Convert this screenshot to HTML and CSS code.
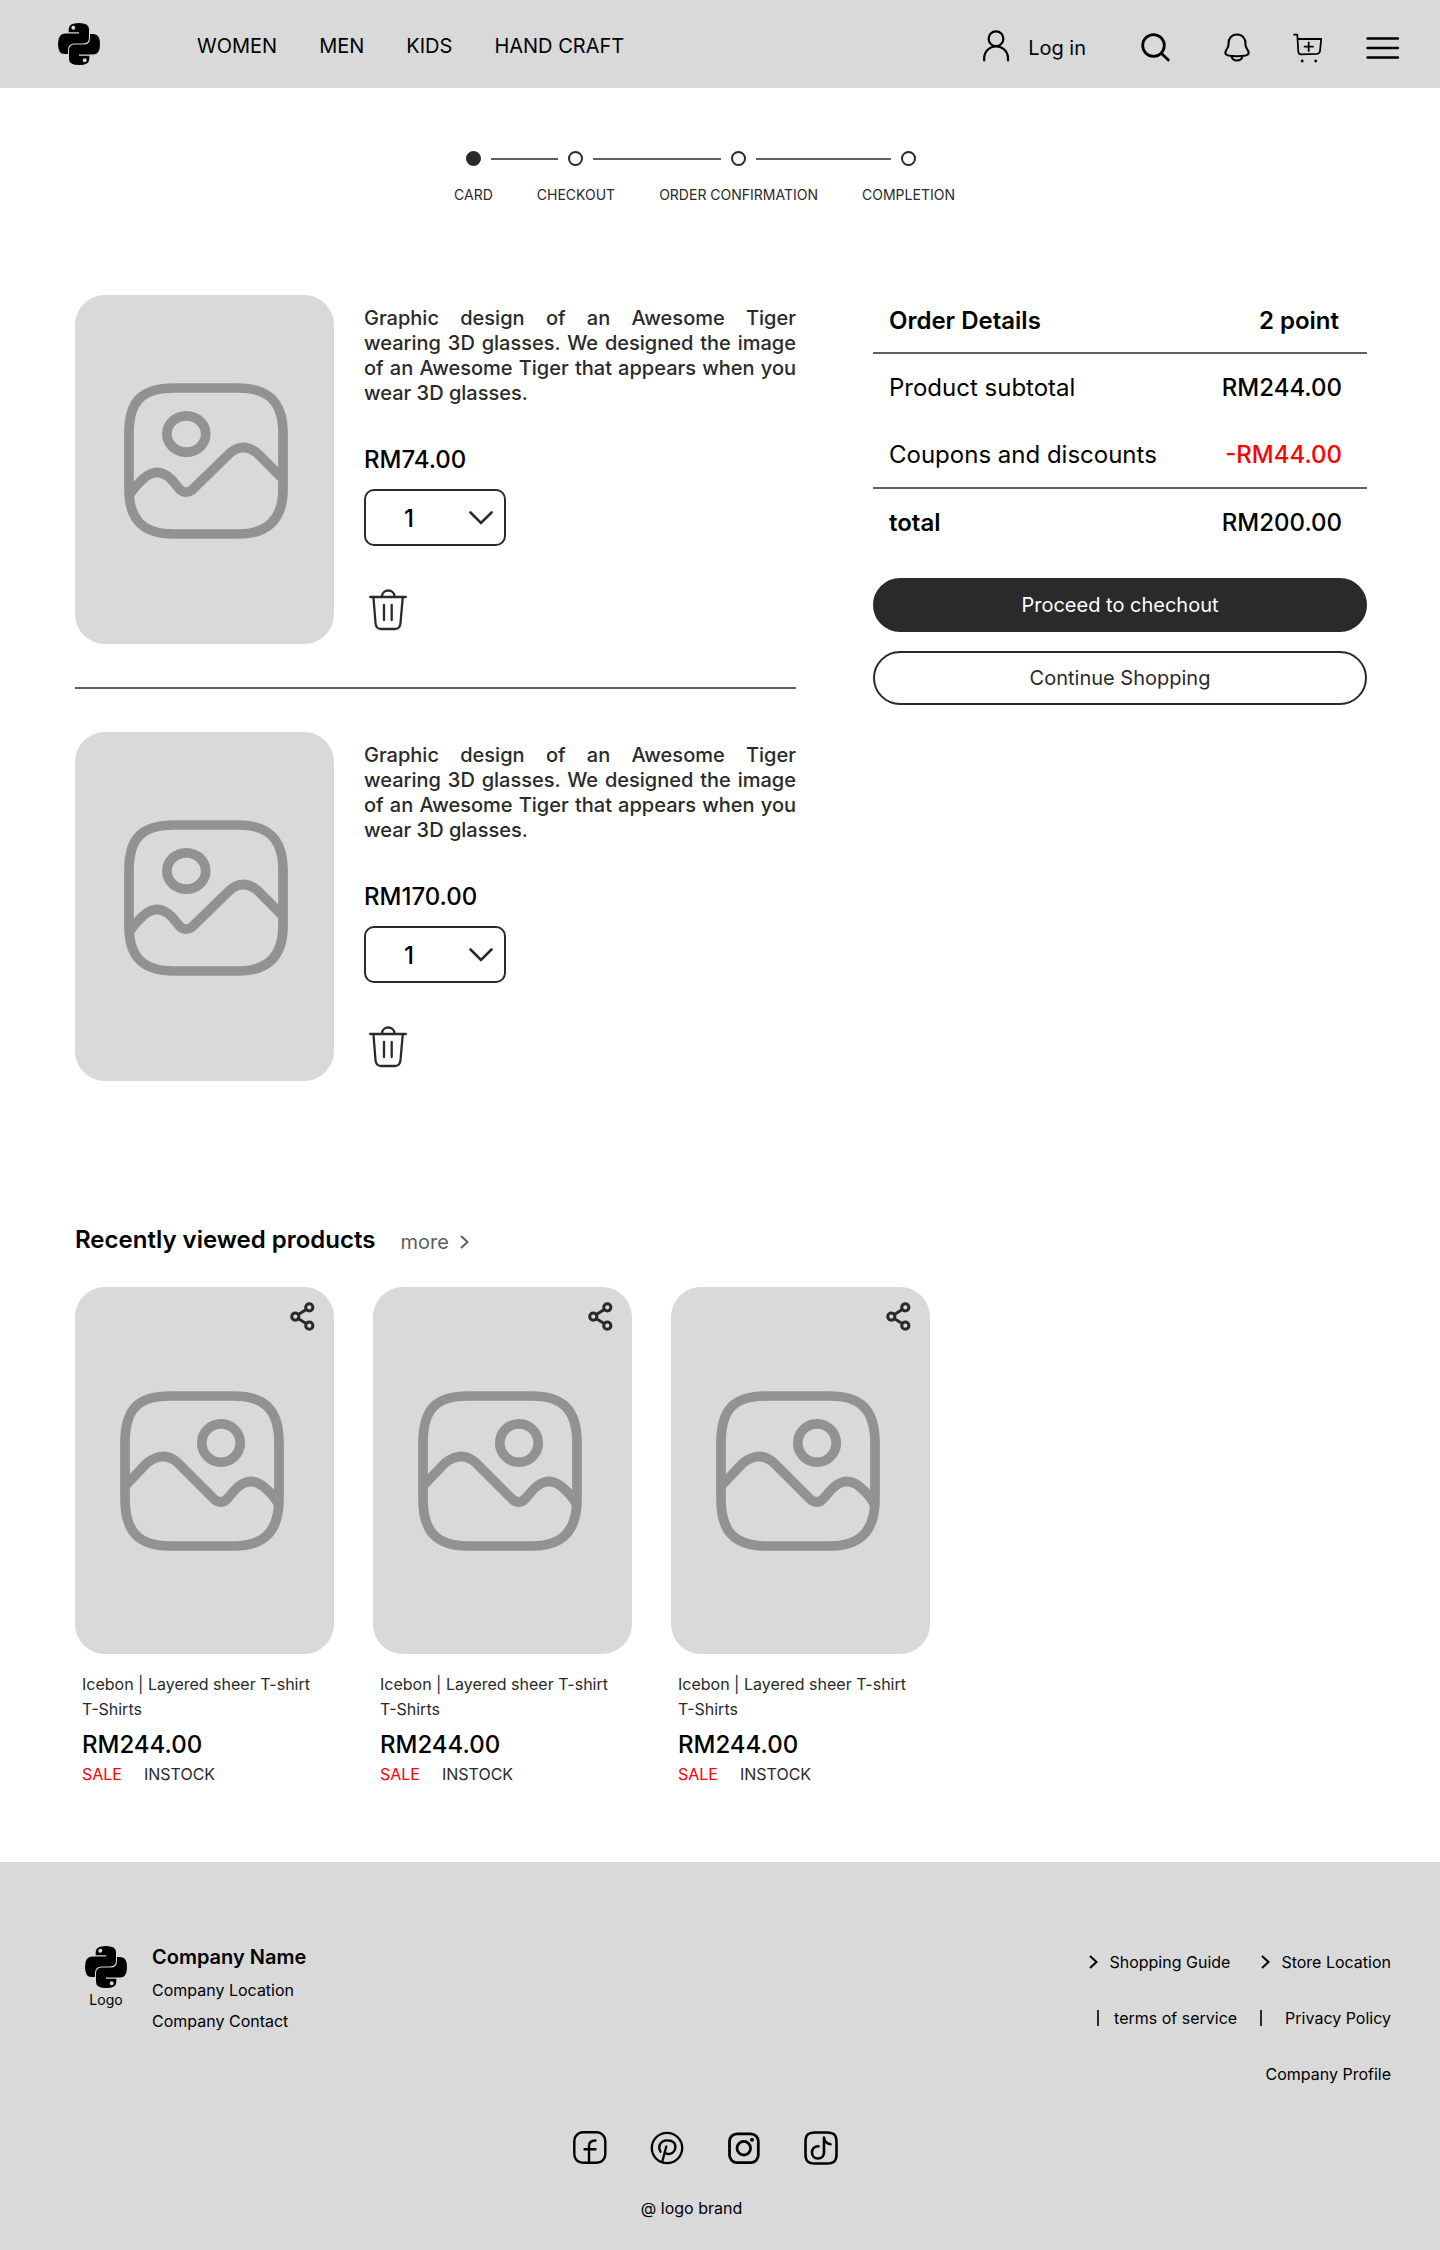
FILE: index.html
```html
<!DOCTYPE html>
<html lang="en">
<head>
<meta charset="utf-8">
<meta name="viewport" content="width=device-width, initial-scale=1">
<title>Shopping cart</title>
<link rel="stylesheet" href="styles.css">
</head>
<body>
<svg class="sprite" aria-hidden="true">
  <defs>
    <symbol id="logo" viewBox="0 0 42 42">
      <g id="logo-half">
        <path fill-rule="evenodd" d="M10.7 9.2V6Q10.7 0 20.8 0Q31 0 31 6V14.5Q31 20.4 25 20.4H16.5Q10 20.4 10 27V31H6.5Q0 31 0 21Q0 10.4 7 10.4H21V9.2ZM15.3 2.8A2 2 0 1 0 15.3 6.8A2 2 0 1 0 15.3 2.8Z"/>
      </g>
      <use href="#logo-half" transform="rotate(180 21 21)"/>
    </symbol>
    <symbol id="picture-a" viewBox="0 0 164 156">
      <g fill="none" stroke="#929292" stroke-width="9.7">
        <path d="M50 5H114C144 5 159 18 159 50V106C159 136 144 151 114 151H50C18 151 5 136 5 106V50C5 18 18 5 50 5Z"/>
        <ellipse cx="62.3" cy="51" rx="19.4" ry="18.2"/>
        <path d="M6 111C11 103 15 100 19 96Q33 83 47 96C51 100 54 105 57 107.500Q62.300 111 68 107L106 70Q119 59 133 70L158 95"/>
      </g>
    </symbol>
    <symbol id="picture-b" viewBox="0 0 164 160">
      <g fill="none" stroke="#929292" stroke-width="9.7">
        <path d="M50 5H114C144 5 159 18 159 52V108C159 140 144 155 114 155H50C18 155 5 140 5 108V52C5 18 18 5 50 5Z"/>
        <circle cx="101" cy="52" r="19.2"/>
        <path d="M6 94L27 72Q44 59 58 72L94 108Q101 114 107 108C112 103 115 98 118 96Q131 85 144 96C150 101 155 106 159 114"/>
      </g>
    </symbol>
    <symbol id="trash" viewBox="0 0 38 42">
      <path fill="none" stroke="#2a2a2a" stroke-width="2.300" stroke-linecap="round" d="M1.200 8H36.800M13 7.500C13 -0.500 25.500 -0.500 25.500 7.500M4.500 9L6.500 34Q7 40 12 40H26Q31 40 31.500 34L33.700 9M15 16V31M22.700 16V31"/>
    </symbol>
    <symbol id="share" viewBox="0 0 25 29">
      <g fill="none" stroke="#2a2a2a" stroke-width="3">
        <circle cx="5.300" cy="14.600" r="3.600"/><circle cx="19.300" cy="5.300" r="3.600"/><circle cx="19.300" cy="23.700" r="3.600"/>
        <path d="M8.400 12.500L16.200 7.400M8.400 16.700L16.200 21.600"/>
      </g>
    </symbol>
    <symbol id="chevron-right" viewBox="0 0 9 14">
      <path fill="none" stroke="currentColor" stroke-width="2" d="M1 1L7.500 7L1 13"/>
    </symbol>
    <symbol id="chevron-down" viewBox="0 0 24 14">
      <path fill="none" stroke="#2a2a2a" stroke-width="2.600" stroke-linecap="round" d="M1.500 1.500L12 12L22.500 1.500"/>
    </symbol>
  </defs>
</svg>

<header class="site-header">
  <a class="logo-link" href="#" aria-label="Home"><svg class="logo"><use href="#logo"/></svg></a>
  <nav class="main-nav" aria-label="Main">
    <a href="#">WOMEN</a>
    <a href="#">MEN</a>
    <a href="#">KIDS</a>
    <a href="#">HAND CRAFT</a>
  </nav>
  <div class="actions">
    <a class="login" href="#">
      <svg width="28" height="37" viewBox="0 0 28 37" fill="none" stroke="#000" stroke-width="2.200" stroke-linecap="round"><circle cx="13" cy="8.700" r="7.400"/><path d="M1.200 30.500V28.200A11.900 11.900 0 0 1 25 28.200V30.500"/></svg>
      <span>Log in</span>
    </a>
    <button class="icon-button search" type="button" aria-label="Search">
      <svg width="32" height="32" viewBox="0 0 32 32" fill="none" stroke="#000" stroke-width="2.800" stroke-linecap="round"><circle cx="13.500" cy="13.500" r="10.800"/><path d="M21.500 21.500L28.300 28"/></svg>
    </button>
    <button class="icon-button" type="button" aria-label="Notifications">
      <svg width="26" height="30" viewBox="0 0 26 30" fill="none" stroke="#000" stroke-width="2.100"><path d="M13 1.500C7.500 1.500 4.500 5.500 4.500 10.500V12C4.500 15 1.300 17 1.300 20C1.300 22.500 6 23.300 13 23.300S24.700 22.500 24.700 20C24.700 17 21.500 15 21.500 12V10.500C21.500 5.500 18.500 1.500 13 1.500Z"/><path d="M7.500 23.500C9 28.800 17 28.800 18.500 23.500"/></svg>
    </button>
    <button class="icon-button" type="button" aria-label="Cart">
      <svg width="30" height="30" viewBox="0 0 30 30" fill="none" stroke="#000" stroke-width="1.800" stroke-linejoin="round" stroke-linecap="round"><path d="M1 1.700H4.300L5.300 18.500Q5.500 21.500 8 21.400L24 20.800Q26.700 20.600 27 18L28.200 6H4.700M11.500 13.700H20M15.700 9.500V18"/><g fill="#000" stroke="none"><circle cx="9.200" cy="28" r="1.400"/><circle cx="22.700" cy="28" r="1.400"/></g></svg>
    </button>
    <button class="icon-button" type="button" aria-label="Menu">
      <svg width="34" height="24" viewBox="0 0 34 24" stroke="#000" stroke-width="2.400" stroke-linecap="round"><path d="M1.500 2.500H32M1.500 12H32M1.500 21.500H32"/></svg>
    </button>
  </div>
</header>

<main>
  <ol class="steps">
    <li class="step step-current" aria-current="step"><span class="track"><span class="dot"></span></span><span class="step-label">CARD</span></li>
    <li class="step"><span class="track"><span class="dot"></span></span><span class="step-label">CHECKOUT</span></li>
    <li class="step"><span class="track"><span class="dot"></span></span><span class="step-label">ORDER CONFIRMATION</span></li>
    <li class="step"><span class="track"><span class="dot"></span></span><span class="step-label">COMPLETION</span></li>
  </ol>

  <div class="checkout">
    <section class="cart" aria-label="Cart">
      <article class="cart-item">
        <div class="cart-picture"><svg width="164" height="156"><use href="#picture-a"/></svg></div>
        <div class="cart-info">
          <p class="description">Graphic design of an Awesome Tiger wearing 3D glasses. We designed the image of an Awesome Tiger that appears when you wear 3D glasses.</p>
          <p class="price">RM74.00</p>
          <div class="quantity">
            <select aria-label="Quantity"><option>1</option><option>2</option><option>3</option></select>
            <svg width="24" height="14"><use href="#chevron-down"/></svg>
          </div>
          <button class="icon-button remove" type="button" aria-label="Remove item"><svg width="38" height="42"><use href="#trash"/></svg></button>
        </div>
      </article>
      <article class="cart-item">
        <div class="cart-picture"><svg width="164" height="156"><use href="#picture-a"/></svg></div>
        <div class="cart-info">
          <p class="description">Graphic design of an Awesome Tiger wearing 3D glasses. We designed the image of an Awesome Tiger that appears when you wear 3D glasses.</p>
          <p class="price">RM170.00</p>
          <div class="quantity">
            <select aria-label="Quantity"><option>1</option><option>2</option><option>3</option></select>
            <svg width="24" height="14"><use href="#chevron-down"/></svg>
          </div>
          <button class="icon-button remove" type="button" aria-label="Remove item"><svg width="38" height="42"><use href="#trash"/></svg></button>
        </div>
      </article>
    </section>

    <aside class="summary">
      <table>
        <thead><tr><th scope="col">Order Details</th><th scope="col">2 point</th></tr></thead>
        <tbody>
          <tr><th scope="row">Product subtotal</th><td>RM244.00</td></tr>
          <tr><th scope="row">Coupons and discounts</th><td class="discount">-RM44.00</td></tr>
        </tbody>
        <tfoot><tr><th scope="row">total</th><td>RM200.00</td></tr></tfoot>
      </table>
      <button class="button button-dark" type="button">Proceed to chechout</button>
      <button class="button" type="button">Continue Shopping</button>
    </aside>
  </div>

  <section class="recent">
    <div class="recent-head">
      <h2>Recently viewed products</h2>
      <a class="more" href="#">more <svg width="9" height="14"><use href="#chevron-right"/></svg></a>
    </div>
    <div class="products">
      <article class="product">
        <div class="product-picture">
          <svg width="164" height="160"><use href="#picture-b"/></svg>
          <button class="icon-button share" type="button" aria-label="Share"><svg width="25" height="29"><use href="#share"/></svg></button>
        </div>
        <div class="product-info">
          <h3>Icebon | Layered sheer T-shirt</h3>
          <p class="category">T-Shirts</p>
          <p class="price">RM244.00</p>
          <p class="tags"><span class="sale">SALE</span><span>INSTOCK</span></p>
        </div>
      </article>
      <article class="product">
        <div class="product-picture">
          <svg width="164" height="160"><use href="#picture-b"/></svg>
          <button class="icon-button share" type="button" aria-label="Share"><svg width="25" height="29"><use href="#share"/></svg></button>
        </div>
        <div class="product-info">
          <h3>Icebon | Layered sheer T-shirt</h3>
          <p class="category">T-Shirts</p>
          <p class="price">RM244.00</p>
          <p class="tags"><span class="sale">SALE</span><span>INSTOCK</span></p>
        </div>
      </article>
      <article class="product">
        <div class="product-picture">
          <svg width="164" height="160"><use href="#picture-b"/></svg>
          <button class="icon-button share" type="button" aria-label="Share"><svg width="25" height="29"><use href="#share"/></svg></button>
        </div>
        <div class="product-info">
          <h3>Icebon | Layered sheer T-shirt</h3>
          <p class="category">T-Shirts</p>
          <p class="price">RM244.00</p>
          <p class="tags"><span class="sale">SALE</span><span>INSTOCK</span></p>
        </div>
      </article>
    </div>
  </section>
</main>

<footer class="site-footer">
  <div class="footer-top">
    <div class="brand">
      <div class="brand-logo"><svg class="logo"><use href="#logo"/></svg><span>Logo</span></div>
      <div class="brand-info">
        <strong>Company Name</strong>
        <span>Company Location</span>
        <span>Company Contact</span>
      </div>
    </div>
    <nav class="footer-links" aria-label="Footer">
      <div class="arrow-links">
        <a href="#"><svg width="9" height="14"><use href="#chevron-right"/></svg>Shopping Guide</a>
        <a href="#"><svg width="9" height="14"><use href="#chevron-right"/></svg>Store Location</a>
      </div>
      <div class="bar-links">
        <a href="#">terms of service</a>
        <a href="#">Privacy Policy</a>
      </div>
      <a href="#">Company Profile</a>
    </nav>
  </div>
  <div class="social">
    <a href="#" aria-label="Facebook"><svg width="34" height="34" viewBox="0 0 34 34" fill="none" stroke="#000" stroke-width="2.400" stroke-linecap="round"><rect x="1.300" y="1.300" width="31" height="30.500" rx="8.500"/><path d="M16 31V15Q16 9.500 22.500 9.500M11.500 18.200H22.500"/></svg></a>
    <a href="#" aria-label="Pinterest"><svg width="34" height="34" viewBox="0 0 34 34" fill="none" stroke="#000" stroke-width="2.300" stroke-linecap="round"><circle cx="17" cy="17" r="15.200"/><path d="M16.300 15.500L12.300 30.500M10.500 20.700C7.500 16 10 9.500 17 9.300C23 9.200 26 12.500 25.300 17C24.700 21 21.500 23 18.500 23C16.800 23 15.500 22.300 14.800 21.300"/></svg></a>
    <a href="#" aria-label="Instagram"><svg width="34" height="34" viewBox="0 0 34 34" fill="none" stroke="#000" stroke-width="2.800"><rect x="2.500" y="2.800" width="28.800" height="28.800" rx="7.500"/><circle cx="16.800" cy="17.200" r="6.800"/><circle cx="25" cy="8.700" r="2" fill="#000" stroke="none"/></svg></a>
    <a href="#" aria-label="TikTok"><svg width="34" height="34" viewBox="0 0 34 34" fill="none" stroke="#000" stroke-width="2.600" stroke-linecap="round" stroke-linejoin="round"><path d="M11 1.500H23C30 1.500 32.500 4 32.500 11V23C32.500 30 30 32.500 23 32.500H11C4 32.500 1.500 30 1.500 23V11C1.500 4 4 1.500 11 1.500Z"/><path d="M14.500 15.200C10 15.200 8 18.500 8 21.500C8 25 10.500 27.500 14 27.500C17.500 27.500 20 25 20 21.500V6.500C20.500 10.500 23.500 13 26.500 13.200"/></svg></a>
  </div>
  <p class="copyright">@ logo brand</p>
</footer>
</body>
</html>
```

FILE: styles.css
```css
* {
  box-sizing: border-box;
}

body {
  margin: 0;
  background: #fff;
  color: #000;
  font-family: Inter, "Liberation Sans", sans-serif;
  font-size: 16px;
  line-height: 20px;
}

h2, h3, p, ol {
  margin: 0;
  padding: 0;
}

a {
  color: inherit;
  text-decoration: none;
}

svg {
  display: block;
  flex: none;
}

button, select {
  font: inherit;
  color: inherit;
}

.sprite {
  position: absolute;
  width: 0;
  height: 0;
}

.logo {
  width: 42px;
  height: 42px;
}

.icon-button {
  display: block;
  padding: 0;
  border: 0;
  background: none;
  cursor: pointer;
}

/* Header */

.site-header {
  display: flex;
  align-items: center;
  min-height: 88px;
  padding: 0 40px 0 58px;
  background: #d9d9d9;
  font-size: 20px;
  line-height: 24px;
}

.main-nav {
  display: flex;
  gap: 42px;
  margin-left: 97px;
  padding-top: 4px;
}

.actions {
  display: flex;
  align-items: center;
  gap: 43px;
  margin-left: auto;
  padding-top: 8px;
}

.login {
  display: flex;
  align-items: center;
  gap: 17px;
}

.search {
  margin: 0 9px 0 11px;
}

/* Progress */

.steps {
  display: flex;
  justify-content: center;
  margin: 63px 31px 92px 0;
  list-style: none;
  color: #2a2a2a;
  font-size: 14px;
  line-height: 17px;
}

.track {
  display: flex;
  align-items: center;
  gap: 10px;
  margin-bottom: 20px;
}

/* Each step draws half of the line to its neighbours */
.track::before,
.track::after {
  content: "";
  flex: 1;
  height: 2px;
  background: #5f5f5f;
}

.step:first-child .track::before,
.step:last-child .track::after {
  background: none;
}

.step-label {
  display: block;
  padding: 0 22px;
  text-align: center;
}

.dot {
  width: 15px;
  height: 15px;
  border: 2px solid #2a2a2a;
  border-radius: 50%;
}

.step-current .dot {
  background: #2a2a2a;
}

/* Cart and summary */

.checkout {
  display: grid;
  grid-template-columns: 721fr 494fr;
  gap: 77px;
  align-items: start;
  padding: 0 73px 0 75px;
}

.cart-item {
  display: flex;
  gap: 30px;
}

.cart-item + .cart-item {
  margin-top: 43px;
  padding-top: 43px;
  border-top: 2px solid #5f5f5f;
}

.cart-picture,
.product-picture {
  display: flex;
  align-items: center;
  justify-content: center;
  flex: none;
  border-radius: 30px;
  background: #d9d9d9;
}

.cart-picture {
  width: 259px;
  height: 349px;
  padding: 0 0 17px 3px;
}

.cart-info {
  flex: 1;
  padding-top: 11px;
}

.description {
  margin-bottom: 39px;
  color: #2a2a2a;
  font-size: 20px;
  font-weight: 500;
  line-height: 25px;
  text-align: justify;
}

.price {
  font-size: 24px;
  font-weight: 500;
  line-height: 29px;
}

.quantity {
  display: grid;
  align-items: center;
  width: 142px;
  margin-top: 15px;
}

.quantity select,
.quantity svg {
  grid-area: 1 / 1;
}

.quantity select {
  appearance: none;
  width: 100%;
  height: 57px;
  padding: 2px 38px 0;
  border: 2px solid #2a2a2a;
  border-radius: 10px;
  background: #fff;
  font-size: 24px;
  font-weight: 500;
}

.quantity svg {
  justify-self: end;
  margin-right: 13px;
  pointer-events: none;
}

.remove {
  margin: 43px 0 0 5px;
}

.summary table {
  width: 100%;
  margin-bottom: 41px;
  border-spacing: 0;
  font-size: 24px;
  line-height: 29px;
}

.summary th,
.summary td {
  padding: 19px 25px 19px 16px;
  text-align: left;
}

.summary th {
  font-weight: 400;
}

.summary td {
  font-weight: 500;
}

.summary td,
.summary th:last-child {
  padding-left: 0;
  text-align: right;
}

.summary thead th {
  padding-top: 11px;
  padding-bottom: 17px;
  border-bottom: 2px solid #5f5f5f;
  font-weight: 600;
}

.summary thead th:last-child {
  padding-right: 28px;
}

.summary tbody tr:last-child > * {
  padding-bottom: 18px;
  border-bottom: 2px solid #5f5f5f;
}

.summary tfoot > tr > * {
  padding-bottom: 0;
}

.summary tfoot th {
  font-weight: 600;
}

.summary .discount,
.sale {
  color: #f00;
}

.button {
  display: block;
  width: 100%;
  height: 54px;
  border: 2px solid #2a2a2a;
  border-radius: 27px;
  background: #fff;
  color: #2a2a2a;
  font-size: 20px;
  cursor: pointer;
}

.button + .button {
  margin-top: 19px;
}

.button-dark {
  background: #2a2a2a;
  color: #fff;
}

/* Recently viewed */

.recent {
  padding: 144px 73px 78px 75px;
}

.recent-head {
  display: flex;
  align-items: flex-end;
  gap: 25px;
  margin-bottom: 33px;
}

.recent h2 {
  font-size: 24px;
  font-weight: 600;
  line-height: 29px;
}

.more {
  display: flex;
  align-items: center;
  gap: 11px;
  color: #5f5f5f;
  font-size: 20px;
  line-height: 24px;
}

.products {
  display: flex;
  flex-wrap: wrap;
  gap: 39px;
}

.product {
  width: 259px;
}

.product-picture {
  position: relative;
  height: 367px;
  padding-right: 5px;
}

.share {
  position: absolute;
  top: 15px;
  right: 19px;
}

.product-info {
  padding: 18px 0 0 7px;
  color: #2a2a2a;
}

.product h3,
.category {
  font-size: 16px;
  font-weight: 400;
  line-height: 25px;
}

.product .price {
  margin: 8px 0 5px;
  color: #000;
}

.tags {
  display: flex;
  gap: 22px;
}

/* Footer */

.site-footer {
  padding: 82px 49px 32px 85px;
  background: #d9d9d9;
}

.footer-top {
  display: flex;
  justify-content: space-between;
}

.brand {
  display: flex;
  gap: 25px;
}

.brand-logo {
  display: flex;
  flex-direction: column;
  align-items: center;
  gap: 3px;
  padding-top: 2px;
  font-size: 14px;
  line-height: 17px;
}

.brand-info {
  display: flex;
  flex-direction: column;
  gap: 11px;
  padding-top: 1px;
}

.brand-info strong {
  font-size: 20px;
  font-weight: 600;
  line-height: 24px;
}

.footer-links {
  display: flex;
  flex-direction: column;
  align-items: flex-end;
  gap: 36px;
  padding-top: 8px;
}

.arrow-links,
.bar-links,
.footer-links a {
  display: flex;
  align-items: center;
}

.arrow-links {
  gap: 31px;
}

.arrow-links a {
  gap: 11px;
}

.bar-links {
  gap: 23px;
}

.bar-links a::before {
  content: "";
  width: 2px;
  height: 16px;
  margin-right: 15px;
  background: #2a2a2a;
}

.bar-links a + a::before {
  margin-right: 23px;
}

.social {
  display: flex;
  justify-content: center;
  gap: 43px;
  margin: 47px 65px 33px 0;
}

.copyright {
  margin-right: 93px;
  text-align: center;
}
```
